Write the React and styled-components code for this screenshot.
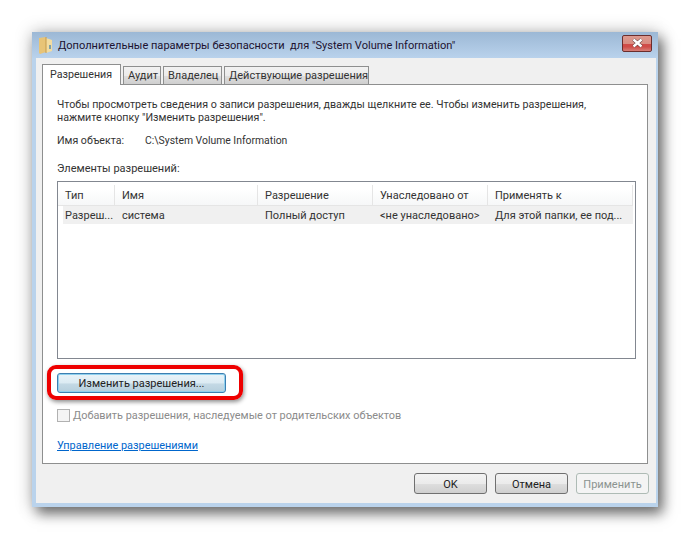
import React from "react";
import styled, { createGlobalStyle } from "styled-components";

const GlobalStyle = createGlobalStyle`
  html, body {
    margin: 0;
    padding: 0;
    width: 690px;
    height: 539px;
    overflow: hidden;
    background: #fff;
  }
  body {
    font-family: Roboto, "Open Sans", sans-serif;
    font-size: 11px;
    color: #333;
  }
`;

const Page = styled.div`
  padding: 32px 32px 0;
`;

const Window = styled.div`
  width: 626px;
  height: 475px;
  box-sizing: border-box;
  display: flex;
  flex-direction: column;
  background: #bad3ec;
  padding: 0 2px 4px 4px;
  box-shadow: 5px 7px 12px rgba(0, 0, 0, 0.5), 0 0 16px rgba(0, 0, 0, 0.25);
`;

const TitleBar = styled.div`
  height: 26px;
  flex: none;
  margin: 0 -2px 0 -4px;
  padding: 0 6px 0 6px;
  display: flex;
  align-items: center;
  gap: 5px;
  background: linear-gradient(#9cb8d5, #b9d2ec);
`;

const Title = styled.div`
  flex: 1;
  font-size: 11.05px;
  color: #1c1230;
  white-space: pre;
`;

const CloseButton = styled.div`
  width: 30px;
  height: 17px;
  margin-top: -4px;
  box-sizing: border-box;
  border: 1px solid #6b2d2c;
  border-radius: 2px;
  display: flex;
  align-items: center;
  justify-content: center;
  background: linear-gradient(#dd9a8f 0, #d98d82 50%, #d04c48 55%, #d04c48 72%, #d68078 100%);
`;

const Body = styled.div`
  flex: 1;
  display: flex;
  flex-direction: column;
  background: #f0f0f0;
  padding: 7px 8px 0 6px;
`;

const Tabs = styled.div`
  display: flex;
  align-items: flex-end;
  height: 20px;
  gap: 2px;
  position: relative;
  z-index: 1;
  margin-bottom: -1px;
`;

const Tab = styled.div`
  box-sizing: border-box;
  width: ${(p) => p.$width}px;
  height: ${(p) => (p.$active ? 21 : 19)}px;
  padding: ${(p) => (p.$active ? "3px 0 0 7px" : "2px 0 0 4px")};
  font-size: ${(p) => (p.$active ? 10.7 : 11)}px;
  border: 1px solid #8e8f8f;
  border-bottom: ${(p) => (p.$active ? "0" : "1px solid #8e8f8f")};
  background: ${(p) => (p.$active ? "#fff" : "linear-gradient(#f2f2f2 0, #ebebeb 50%, #dddddd 55%, #cfcfcf 100%)")};
  white-space: nowrap;
  line-height: 14px;
`;

const Panel = styled.div`
  box-sizing: border-box;
  height: 380px;
  display: flex;
  flex-direction: column;
  background: #fff;
  border: 1px solid #8e8f8f;
  padding: 13px 11px 0 14px;
`;

const Intro = styled.div`
  font-size: 10.7px;
  line-height: 13px;
  white-space: nowrap;
`;

const ObjectRow = styled.div`
  display: flex;
  margin-top: 10px;
  font-size: 10.6px;
  line-height: 13px;
`;

const ObjectLabel = styled.div`
  width: 88px;
`;

const ObjectPath = styled.div`
  font-size: 10.4px;
`;

const SectionLabel = styled.div`
  margin-top: 15px;
  line-height: 13px;
`;

const List = styled.div`
  box-sizing: border-box;
  margin-top: 6px;
  height: 178px;
  border: 1px solid #828790;
  padding-right: 2px;
`;

const columns = "57px 143px 115px 115px 145px";

const HeaderRow = styled.div`
  display: grid;
  grid-template-columns: ${columns};
  height: 24px;
  box-sizing: border-box;
  padding-top: 3px;
  border-bottom: 1px solid #e5e5e5;
  background: linear-gradient(#ffffff 0, #ffffff 30%, #f6f7f8 100%);
`;

const HeaderCell = styled.div`
  display: flex;
  align-items: center;
  padding-left: 7px;
  border-right: 1px solid #e5e5e5;
  white-space: nowrap;
`;

const DataRow = styled.div`
  display: grid;
  grid-template-columns: ${columns};
  margin-left: 5px;
  height: 18px;
  background: #f0f0f0;
`;

const DataCell = styled.div`
  display: flex;
  align-items: center;
  padding-top: 1px;
  padding-left: ${(p) => (p.$first ? 2 : 7)}px;
  margin-left: ${(p) => (p.$first ? 0 : -5)}px;
  margin-right: ${(p) => (p.$first ? 0 : 5)}px;
  white-space: nowrap;
`;

const ButtonSlot = styled.div`
  position: relative;
  margin-top: 14px;
  width: 169px;
`;

const HighlightRing = styled.div`
  position: absolute;
  left: -10px;
  right: -17px;
  top: -8px;
  bottom: -7px;
  border: 4px solid #ee0000;
  border-radius: 9px;
  box-shadow: 1px 2px 4px rgba(0, 0, 0, 0.45);
`;

const EditButton = styled.div`
  box-sizing: border-box;
  height: 20px;
  display: flex;
  align-items: center;
  justify-content: center;
  border: 1px solid #3c7fb1;
  border-radius: 3px;
  color: #222;
  background: linear-gradient(#e9f3f8 0, #dcebf3 50%, #c4d9e5 55%, #b6cfdd 100%);
  box-shadow: inset 0 0 0 1px #8fd0ee;
`;

const CheckRow = styled.div`
  display: flex;
  align-items: center;
  gap: 3px;
  margin-top: 16px;
  font-size: 10.9px;
  color: #8b8b8b;
`;

const CheckBox = styled.div`
  width: 13px;
  height: 13px;
  box-sizing: border-box;
  border: 1px solid #b1b1b1;
  background: #f4f4f4;
`;

const HelpLink = styled.div`
  margin-top: 17px;
  font-size: 10.9px;
  color: #0066cc;
  text-decoration: underline;
  line-height: 13px;
`;

const Footer = styled.div`
  display: flex;
  justify-content: flex-end;
  gap: 8px;
  padding-top: 9px;
  margin-right: -1px;
`;

const DialogButton = styled.div`
  box-sizing: border-box;
  width: ${(p) => p.$width}px;
  height: 21px;
  padding-top: 1px;
  display: flex;
  align-items: center;
  justify-content: center;
  border: 1px solid ${(p) => (p.$disabled ? "#aebbb5" : "#707070")};
  border-radius: 3px;
  color: ${(p) => (p.$disabled ? "#8b9390" : "#222")};
  background: ${(p) =>
    p.$disabled
      ? "#f4f4f4"
      : "linear-gradient(#f2f2f2 0, #ebebeb 50%, #dddddd 55%, #cfcfcf 100%)"};
`;

function FolderIcon() {
  return (
    <svg width="15" height="19" viewBox="0 0 15 19">
      <path d="M1 2 L8 1 L8 16 L2 18 L1 17 Z" fill="#e8c477" />
      <path d="M8 2 L14 4 L14 15 L8 17 Z" fill="#f3dca0" />
      <path d="M8 1 L8 17" stroke="#c49a4c" strokeWidth="1" />
      <rect x="11" y="9" width="2" height="4" fill="#7fa0a8" />
    </svg>
  );
}

function CloseIcon() {
  return (
    <svg width="13" height="10" viewBox="0 0 13 10">
      <path d="M2.5 1.5 L10.5 8.5 M10.5 1.5 L2.5 8.5" stroke="#5a3a38" strokeWidth="3.6" />
      <path d="M2.5 1.5 L10.5 8.5 M10.5 1.5 L2.5 8.5" stroke="#ffffff" strokeWidth="2.4" />
    </svg>
  );
}

const headers = ["Тип", "Имя", "Разрешение", "Унаследовано от", "Применять к"];
const cells = ["Разреш...", "система", "Полный доступ", "<не унаследовано>", "Для этой папки, ее под..."];

export default function App() {
  return (
    <>
      <GlobalStyle />
      <Page>
        <Window>
          <TitleBar>
            <FolderIcon />
            <Title>Дополнительные параметры безопасности  для "System Volume Information"</Title>
            <CloseButton>
              <CloseIcon />
            </CloseButton>
          </TitleBar>
          <Body>
            <Tabs>
              <Tab $active $width={79}>Разрешения</Tab>
              <Tab $width={38}>Аудит</Tab>
              <Tab $width={59}>Владелец</Tab>
              <Tab $width={145}>Действующие разрешения</Tab>
            </Tabs>
            <Panel>
              <Intro>
                Чтобы просмотреть сведения о записи разрешения, дважды щелкните ее. Чтобы изменить разрешения,
                <br />
                нажмите кнопку "Изменить разрешения".
              </Intro>
              <ObjectRow>
                <ObjectLabel>Имя объекта:</ObjectLabel>
                <ObjectPath>C:\System Volume Information</ObjectPath>
              </ObjectRow>
              <SectionLabel>Элементы разрешений:</SectionLabel>
              <List>
                <HeaderRow>
                  {headers.map((h) => (
                    <HeaderCell key={h}>{h}</HeaderCell>
                  ))}
                </HeaderRow>
                <DataRow>
                  {cells.map((c, i) => (
                    <DataCell key={c} $first={i === 0}>{c}</DataCell>
                  ))}
                </DataRow>
              </List>
              <ButtonSlot>
                <EditButton>Изменить разрешения...</EditButton>
                <HighlightRing />
              </ButtonSlot>
              <CheckRow>
                <CheckBox />
                Добавить разрешения, наследуемые от родительских объектов
              </CheckRow>
              <HelpLink>Управление разрешениями</HelpLink>
            </Panel>
            <Footer>
              <DialogButton $width={73}>OK</DialogButton>
              <DialogButton $width={73}>Отмена</DialogButton>
              <DialogButton $width={73} $disabled>Применить</DialogButton>
            </Footer>
          </Body>
        </Window>
      </Page>
    </>
  );
}
